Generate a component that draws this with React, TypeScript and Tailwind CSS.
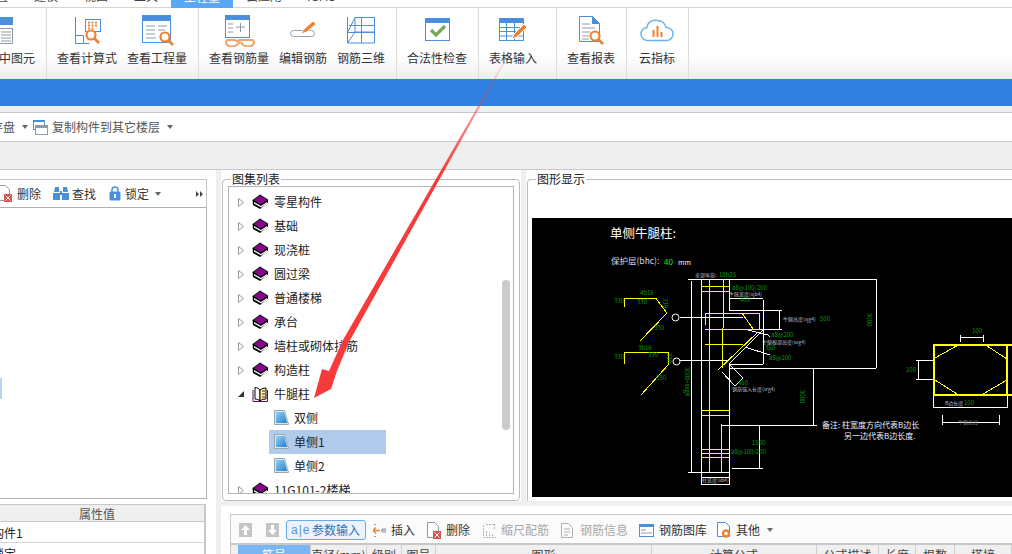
import React from "react";

const BLUE = "#4a8fdc";
const ORANGE = "#ee8230";

const Svg = ({ w = 40, h = 32, children }: { w?: number; h?: number; children: React.ReactNode }) => (
  <svg width={w} height={h} viewBox={`0 0 ${w} ${h}`} fill="none" className="shrink-0">
    {children}
  </svg>
);

const Lens = ({ x, y }: { x: number; y: number }) => (
  <g stroke={ORANGE} fill="#fff">
    <circle cx={x} cy={y} r="4.5" strokeWidth="2.2" />
    <path d={`M${x + 3} ${y + 3}l5 5`} strokeWidth="2.6" />
  </g>
);

const CalcIcon = () => (
  <Svg>
    <path d="M8.500 2v26.500h8v-8h-8M16.500 28.500h6" stroke={BLUE} />
    <rect x="18.500" y="4.500" width="15" height="12" stroke={BLUE} fill="#fff" />
    <path d="M21 7.500h10M21 10.500h10M21 13.500h6" stroke={ORANGE} strokeWidth="2" strokeDasharray="2 1.500" />
    <Lens x={24} y={20} />
  </Svg>
);

const QtyIcon = () => (
  <Svg>
    <rect x="5.500" y="0.500" width="28" height="27" stroke={BLUE} fill="#fff" />
    <rect x="5" y="0" width="29" height="6" fill={BLUE} />
    <path d="M9 11h9M21 11h9M9 15h9M21 15h7M9 19h9M9 23h10" stroke="#8d9aa5" />
    <Lens x={28} y={22} />
  </Svg>
);

const SteelIcon = () => (
  <Svg>
    <rect x="6.500" y="0.500" width="24" height="22" stroke={BLUE} fill="#fff" />
    <rect x="6" y="0" width="25" height="5" fill={BLUE} />
    <path d="M9 9h5M9 13h5M9 17h5M17 12h9M21.500 8v9" stroke="#8d9aa5" />
    <path d="M7 28a6 3.500 0 0 0 12 0a4 4 0 0 1 4 0a6 3.500 0 0 0 12 0c0-2-1-3-2-3H21c-2 0-2 1-3 1s-1-1-3-1H9c-1 0-2 1-2 3z" stroke="#f0a46a" strokeWidth="2" fill="#fff" />
  </Svg>
);

const EditIcon = () => (
  <Svg>
    <rect x="7.500" y="15.500" width="24" height="6" rx="3" stroke="#9aa3aa" />
    <path d="M18 19l3-5 9-8 3 3-9 8z" fill={ORANGE} stroke="#fff" />
  </Svg>
);

const FrameIcon = () => (
  <Svg>
    <g stroke={BLUE}>
      <path d="M6.500 2v26M20.500 2v26M33.500 2v26" />
      <path d="M6.500 17.500L14 2.500h19M6.500 28L14 17h19M6.500 28h27M6.500 17.500h27M8 10.500h25M14 2.500v15" />
    </g>
  </Svg>
);

const CheckIcon = () => (
  <Svg>
    <rect x="8.500" y="3.500" width="24" height="22" stroke={BLUE} fill="#fff" />
    <rect x="8" y="3" width="25" height="5" fill={BLUE} />
    <path d="M14 15l5 5 9-9" stroke="#74a95a" strokeWidth="3.200" />
  </Svg>
);

const TableIcon = () => (
  <Svg>
    <rect x="6.500" y="3.500" width="24" height="22" stroke={BLUE} fill="#fff" />
    <rect x="6" y="3" width="25" height="5" fill={BLUE} />
    <path d="M7 12.500h23M7 16.500h23M7 21h23M13.500 8v17M21.500 8v17" stroke={BLUE} />
    <path d="M19 24l2-5 10-10 3 3-10 10z" fill={ORANGE} stroke="#fff" />
  </Svg>
);

const ReportIcon = () => (
  <Svg>
    <path d="M8.500 1.500h13l7 7v18h-20z" stroke={BLUE} fill="#fff" />
    <path d="M21 1l8 8h-8z" fill={BLUE} />
    <path d="M11 9h8M11 13h13M11 17h8M11 21h7M11 24h7" stroke="#8d9aa5" />
    <Lens x={24} y={21} />
  </Svg>
);

const CloudIcon = () => (
  <Svg>
    <path d="M11 25.500a6.500 6.500 0 0 1-1-13a8 8 0 0 1 10-7a8.500 8.500 0 0 1 9 7a6.500 6.500 0 0 1 1 13z" stroke="#6ab3ee" strokeWidth="1.500" fill="#fff" />
    <path d="M16.500 15v7M20.500 11v11M24.500 17v5" stroke={ORANGE} strokeWidth="2" />
  </Svg>
);

const ribbon = [
  { w: "w-[47px] justify-end pr-[11px]", items: [{ t: "选中图元", i: <TableIconClip /> }] },
  { w: "pl-[10px] pr-[11px] gap-[10px]", items: [{ t: "查看计算式", i: <CalcIcon /> }, { t: "查看工程量", i: <QtyIcon /> }] },
  { w: "pl-[10px] pr-[11px] gap-[10px]", items: [{ t: "查看钢筋量", i: <SteelIcon /> }, { t: "编辑钢筋", i: <EditIcon /> }, { t: "钢筋三维", i: <FrameIcon /> }] },
  { w: "pl-[10px] pr-[11px]", items: [{ t: "合法性检查", i: <CheckIcon /> }] },
  { w: "pl-[10px] pr-[19px]", items: [{ t: "表格输入", i: <TableIcon /> }] },
  { w: "pl-[10px] pr-[11px]", items: [{ t: "查看报表", i: <ReportIcon /> }] },
  { w: "pl-[10px] pr-[11px]", items: [{ t: "云指标", i: <CloudIcon /> }] },
];

function TableIconClip() {
  return (
    <Svg>
      <rect x="5" y="2" width="17" height="8" fill={BLUE} />
      <rect x="8.500" y="13.500" width="13" height="15" fill="#fff" stroke="#8d9aa5" />
      <path d="M10 17h10M10 20h10M10 23h10M10 26h10" stroke="#8d9aa5" />
    </Svg>
  );
}

const Caret = () => (
  <span className="block w-0 h-0 border-x-[3px] border-x-transparent border-t-[4px] border-t-[#666]" />
);

const Book = () => (
  <svg width="17" height="16" viewBox="0 0 17 16" className="shrink-0">
    <path d="M0.500 6L8 0.500l8 5v3L8 15 1 11z" fill="#000" />
    <path d="M1.500 6L8 1.500l7.500 4.500L9 10.500z" fill="#800a84" />
    <path d="M2 8l7 4 6-4v1.500l-6 4-7-4z" fill="#fff" />
  </svg>
);

const OpenBook = () => (
  <svg width="17" height="17" viewBox="0 0 17 17" className="shrink-0">
    <path d="M3 1.500c2 0 4 1 5 2.500v11c-1-1-3-2-5-2z" fill="#fff" stroke="#000" />
    <path d="M8 4c1-1 3-2 6-2v11c-3 0-5 1-6 2z" fill="#fff58a" stroke="#000" />
    <path d="M1 4v11.500h14.500V4M10 5h3M10 8h3M10 11h3" stroke="#5b0a60" fill="none" />
  </svg>
);

const Sheet = () => (
  <svg width="15" height="16" viewBox="0 0 15 16" className="shrink-0">
    <defs>
      <linearGradient id="sheet" x1="0" y1="0" x2="1" y2="1">
        <stop offset="0" stopColor="#8fd3f5" />
        <stop offset="1" stopColor="#1f7fd0" />
      </linearGradient>
    </defs>
    <path d="M0.500 0.500h10l4 14h-14z" fill="#dfe5e8" stroke="#9aa6ad" />
    <path d="M2 2h8l3 11H2z" fill="url(#sheet)" />
  </svg>
);

const tree = ["零星构件", "基础", "现浇桩", "圆过梁", "普通楼梯", "承台", "墙柱或砌体拉筋", "构造柱"];

const Tri = () => (
  <svg width="6" height="9" viewBox="0 0 6 9" className="shrink-0">
    <path d="M0.500 0.500l5 4-5 4z" fill="#fff" stroke="#9a9a9a" />
  </svg>
);

const TreeRow = ({ label }: { label: string }) => (
  <div className="h-[24px] flex items-center pl-[9px]">
    <Tri />
    <div className="ml-[8px] mr-[5px]"><Book /></div>
    <span>{label}</span>
  </div>
);

const LeafRow = ({ label, sel }: { label: string; sel?: boolean }) => (
  <div className={`h-[24px] ml-[40px] w-[117px] flex items-center pl-[5px] gap-[5px] ${sel ? "bg-[#b1cbec]" : ""}`}>
    <Sheet />
    <span>{label}</span>
  </div>
);

// labels inside the drawing, page coordinates
const dim = "#0a9a0a";
const pale = "#b9b9c8";
const labels: { x: number; y: number; t: string; c: string; s?: number }[] = [
  { x: 695, y: 277, t: "全部纵筋:", c: pale, s: 5 },
  { x: 719, y: 277, t: "18b25", c: dim },
  { x: 732, y: 290, t: "a8@100/200", c: dim },
  { x: 729, y: 296, t: "牛肢宽度(sjb4)", c: pale, s: 5 },
  { x: 740, y: 302, t: "400", c: dim },
  { x: 783, y: 321, t: "牛腿高度(sjg4)", c: pale, s: 5 },
  { x: 820, y: 321, t: "500", c: dim },
  { x: 771, y: 337, t: "a8@200", c: dim },
  { x: 762, y: 344, t: "牛腿根部高度(sxg4)", c: pale, s: 5 },
  { x: 765, y: 350, t: "350", c: dim },
  { x: 769, y: 360, t: "a8@200", c: dim },
  { x: 732, y: 391, t: "钢筋锚入长度(srg4)", c: pale, s: 5 },
  { x: 738, y: 385, t: "450", c: dim },
  { x: 752, y: 445, t: "1500", c: dim },
  { x: 731, y: 454, t: "a8@100/200", c: dim },
  { x: 702, y: 482, t: "柱宽度(sb4)", c: pale, s: 5 },
  { x: 640, y: 295, t: "4b16", c: dim },
  { x: 614, y: 303, t: "330", c: dim },
  { x: 637, y: 304, t: "330", c: dim },
  { x: 654, y: 330, t: "330", c: dim },
  { x: 638, y: 350, t: "3b16", c: dim },
  { x: 614, y: 359, t: "330", c: dim },
  { x: 648, y: 357, t: "330", c: dim },
  { x: 656, y: 380, t: "330", c: dim },
  { x: 972, y: 333, t: "100", c: dim },
  { x: 906, y: 372, t: "100", c: dim },
  { x: 945, y: 405, t: "B边长度", c: pale, s: 5 },
  { x: 964, y: 405, t: "100", c: dim },
  { x: 958, y: 424, t: "牛腿总高", c: "#888", s: 5 },
];

const vLabels = [
  { x: 685, y: 367, t: "3000+sxg4" },
  { x: 800, y: 390, t: "3000" },
  { x: 867, y: 313, t: "3000" },
  { x: 663, y: 298, t: "330" },
  { x: 667, y: 353, t: "330" },
];

const white = [
  "M688 279.500H877", "M691.500 281V472", "M688 472.500H730", "M701.500 279V485", "M729.500 279V310", "M729.500 365V485",
  "M701 477.500H730", "M701 484.500H730", "M729 298.500H763", "M763.500 300V364", "M729 310.500H782", "M779.500 310V329",
  "M744 329.500H782", "M729 364.500H763", "M729 368.500H876", "M813.500 368V425", "M722 425.500H817", "M759.500 425V468",
  "M732 468.500H763", "M876.500 279V368", "M680 317.500H743", "M680 360.500H728", "M916 360.500H933", "M916 379.500H933",
  "M918.500 360V379", "M960 337.500H983", "M960.500 335V342", "M983.500 335V342", "M933 407.500H1007", "M933.500 396V408",
  "M1007.500 396V408", "M942 422.500H999", "M942.500 415V425", "M999.500 415V425",
  "M729 364L763 330", "M722 372L735 386L743 378L729 364", "M744 329L768 335L770 337", "M745 347L770 355",
];
const yellow = [
  "M701 286.500H729", "M701 291.500H729", "M709.500 279V472", "M723.500 279V328", "M722.500 328V368", "M721.500 424V472",
  "M705 313.500H759", "M705.500 313V325", "M759.500 313V330", "M705 329.500H759", "M705 344.500H743", "M701 410.500H729",
  "M701 415.500H729", "M701 449.500H729", "M701 453.500H729", "M701 457.500H729",
  "M742 313L753 329", "M718 370L757 333", "M624.500 307V298.500H656L667 313L640 341",
  "M624.500 364V352.500H668V365L641 395", "M935 358L960 344", "M984 344L1007 359", "M935 380L957 394", "M983 394L1007 380",
];

const Drawing = () => (
  <svg width="480" height="279" viewBox="532 218 480 279" className="block bg-black" style={{ fontFamily: "'Noto Sans CJK SC', sans-serif" }}>
    <g stroke="#fff" fill="none" shapeRendering="crispEdges">
      {white.map((d) => <path key={d} d={d} />)}
    </g>
    <circle cx="675.500" cy="317.500" r="3.500" stroke="#fff" fill="none" />
    <circle cx="676.500" cy="361.500" r="3.500" stroke="#fff" fill="none" />
    <g stroke="#ffff00" fill="none" shapeRendering="crispEdges">
      {yellow.map((d) => <path key={d} d={d} />)}
      <path d="M934 345H1012M934 395H1012M934 344V396M1007 344V396" strokeWidth="2" />
    </g>
    {labels.map((l) => (
      <text key={l.x + l.t + l.y} x={l.x} y={l.y} fontSize={l.s ?? 6} fill={l.c}>{l.t}</text>
    ))}
    {vLabels.map((l) => (
      <text key={l.t + l.x} x={l.x} y={l.y} fontSize="6" fill={dim} transform={`rotate(90 ${l.x} ${l.y})`}>{l.t}</text>
    ))}
    <text x="610" y="238" fontSize="12.500" fill="#fff">单侧牛腿柱:</text>
    <text x="611" y="264" fontSize="8.500" fill="#d8d8e8">保护层(bhc):</text>
    <text x="664" y="265" fontSize="8" fill="#00ff00">40</text>
    <text x="678" y="265" fontSize="7" fill="#fff">mm</text>
    <text x="822" y="428" fontSize="8" fill="#f0f0ff">备注: 柱宽度方向代表B边长</text>
    <text x="844" y="439" fontSize="8" fill="#f0f0ff">另一边代表B边长度.</text>
  </svg>
);

const DelIcon = () => (
  <svg width="14" height="17" viewBox="0 0 14 17" className="shrink-0">
    <path d="M0.500 0.500h7l4 4v11h-11z" fill="#fff" stroke="#8d9aa5" />
    <rect x="6" y="9" width="8" height="8" fill="#d9534f" />
    <path d="M7.500 10.500l5 5M12.500 10.500l-5 5" stroke="#fff" />
  </svg>
);

const Tool = ({ icon, label, off, cls }: { icon: React.ReactNode; label: string; off?: boolean; cls?: string }) => (
  <div className={`flex items-center gap-[5px] ${off ? "text-[#a8a8a8]" : "text-[#333]"} ${cls ?? ""}`}>
    {icon}
    <span>{label}</span>
  </div>
);

const cols = [
  { w: "w-[73px]", t: "筋号", c: "bg-[#7ab6f5] text-white" },
  { w: "w-[56px]", t: "直径(mm)" },
  { w: "w-[35px]", t: "级别" },
  { w: "w-[34px]", t: "图号" },
  { w: "w-[216px]", t: "图形" },
  { w: "w-[165px]", t: "计算公式" },
  { w: "w-[62px]", t: "公式描述" },
  { w: "w-[37px]", t: "长度" },
  { w: "w-[39px]", t: "根数" },
  { w: "w-[57px]", t: "搭接" },
];

export default function App() {
  return (
    <div
      className="relative w-[1012px] h-[554px] overflow-hidden flex flex-col bg-[#efefef] text-[12px] leading-[16px] text-[#222]"
      style={{ fontFamily: "'Microsoft YaHei', 'Noto Sans CJK SC', sans-serif" }}
    >
      {/* tabs, cut off by the top of the window */}
      <div className="h-[8px] shrink-0 flex bg-white border-b border-[#d4d4d4] text-[#444]">
        <div className="w-[21px] h-[7px] flex items-end justify-end pb-[3px] pr-[13px]"><span className="shrink-0">布置</span></div>
        {["建模", "视图", "工具"].map((t) => (
          <div key={t} className="w-[50px] h-[7px] flex items-end justify-center pb-[3px]"><span>{t}</span></div>
        ))}
        <div className="w-[62px] h-[8px] -mb-px flex items-end justify-center pb-[3px] bg-[#5ba7f5] text-white"><span>工程量</span></div>
        <div className="w-[62px] h-[7px] flex items-end justify-center pb-[3px]"><span>云应用</span></div>
        <div className="ml-[12px] h-[7px] flex items-end pb-[3px]"><span>IGMS</span></div>
      </div>

      {/* ribbon */}
      <div className="h-[71px] shrink-0 flex bg-linear-to-b from-white from-65% to-[#eceeec]">
        {ribbon.map((g) => (
          <div key={g.items[0].t} className={`h-full flex border-r border-[#dcdcdc] ${g.w}`}>
            {g.items.map((it) => (
              <div key={it.t} className="flex flex-col items-center pt-[7px] text-[#333]">
                <div className="h-[35px] w-[40px] overflow-visible">{it.i}</div>
                <span className="whitespace-nowrap">{it.t}</span>
              </div>
            ))}
          </div>
        ))}
      </div>

      <div className="h-[27px] shrink-0 bg-[#2f80e0]" />
      <div className="h-[6px] shrink-0" />

      <div className="h-[30px] shrink-0 flex items-center bg-white border-y border-[#c8c8cc] text-[#555]">
        <div className="w-[15px] flex justify-end"><span className="shrink-0">存盘</span></div>
        <div className="ml-[7px]"><Caret /></div>
        <div className="ml-[5px] mr-[4px]">
          <svg width="15" height="15" viewBox="0 0 15 15" className="block">
            <rect x="0.500" y="0.500" width="11" height="9" fill="#fff" stroke={BLUE} />
            <rect x="0" y="0" width="12" height="2" fill={BLUE} />
            <rect x="2.500" y="5.500" width="12" height="9" fill="#fff" stroke="#8d9aa5" />
            <rect x="2" y="5" width="13" height="3" fill="#8d9aa5" />
          </svg>
        </div>
        <span>复制构件到其它楼层</span>
        <div className="ml-[7px]"><Caret /></div>
      </div>

      <div className="h-[28px] shrink-0 border-b border-[#c8c8cc]" />

      {/* main area */}
      <div className="flex-1 flex min-h-0">
        {/* left column */}
        <div className="w-[216px] shrink-0 bg-white pt-[9px]">
          <div className="w-[207px] h-[29px] flex items-center border-y border-r border-[#c4c4c4] border-b-[#b0b0b0] text-[#333]">
            <div className="-ml-[2px] w-[14px]"><DelIcon /></div>
            <span className="ml-[5px]">删除</span>
            <svg width="16" height="15" viewBox="0 0 16 15" className="ml-[12px] shrink-0">
              <path d="M1 6h5V1H2zM10 1v5h5l-1-5zM0 7h7v7H0zM9 7h7v7H9z" fill={BLUE} />
              <rect x="7" y="5" width="2" height="4" fill={BLUE} />
            </svg>
            <span className="ml-[3px]">查找</span>
            <svg width="12" height="15" viewBox="0 0 12 15" className="ml-[13px] shrink-0">
              <path d="M3 6V4a3 3 0 0 1 6 0v2" stroke={BLUE} strokeWidth="1.500" fill="none" />
              <rect x="0.500" y="5.500" width="11" height="9" rx="1.500" fill={BLUE} />
              <rect x="5" y="8" width="2" height="4" fill="#fff" />
            </svg>
            <span className="ml-[4px]">锁定</span>
            <div className="ml-[6px]"><Caret /></div>
            <svg width="7" height="6" viewBox="0 0 7 6" className="ml-auto mr-[3px] shrink-0">
              <path d="M0 0l3 3-3 3zM4 0l3 3-3 3z" fill="#444" />
            </svg>
          </div>
          <div className="relative w-[207px] h-[291px] bg-white border-r border-b border-[#b0b0b0]">
            <div className="absolute left-0 top-[170px] w-[2px] h-[21px] bg-[#b9d3f2]" />
          </div>
          <div className="h-[5px]" />
          <div className="w-[206px] border-r-2 border-[#c8c8c8] overflow-hidden">
            <div className="h-[18px] flex items-center justify-center bg-[#efefef] border-y border-[#c8c8c8] text-[#555] pt-px pr-[10px]">属性值</div>
            <div className="h-[21px] flex items-center border-b border-[#d4d4d4] -ml-[8px] pt-px">构件1</div>
            <div className="h-[21px] flex items-center -ml-[8px]">锁定</div>
          </div>
        </div>

        {/* right side */}
        <div className="flex-1 min-w-0 pl-[5px] flex flex-col">
          <div className="h-[331px] shrink-0 flex gap-[5px]">
            <div className="w-[300px] bg-white pt-[2px] pl-px pr-px">
              <fieldset className="h-full border border-[#bcbcbc] rounded-[4px] px-[5px] pb-[5px] min-w-0">
                <legend className="ml-[3px] leading-[14px] px-px">图集列表</legend>
                <div className="relative h-[308px] border border-[#b4b4b4] overflow-hidden pt-[3px]">
                  {tree.map((t) => <TreeRow key={t} label={t} />)}
                  <div className="h-[24px] flex items-center pl-[9px]">
                    <svg width="6" height="6" viewBox="0 0 6 6" className="shrink-0"><path d="M6 0v6H0z" fill="#333" /></svg>
                    <div className="ml-[8px] mr-[5px]"><OpenBook /></div>
                    <span>牛腿柱</span>
                  </div>
                  <LeafRow label="双侧" />
                  <LeafRow label="单侧1" sel />
                  <LeafRow label="单侧2" />
                  <TreeRow label="11G101-2楼梯" />
                  <div className="absolute right-[3px] top-[93px] w-[8px] h-[150px] rounded-[4px] bg-[#cacaca]" />
                </div>
              </fieldset>
            </div>
            <div className="flex-1 min-w-0 bg-white pt-[2px] pl-px">
              <fieldset className="h-full border border-r-0 border-b-0 border-[#bcbcbc] rounded-tl-[4px] pl-[4px] min-w-0">
                <legend className="ml-[4px] leading-[14px] px-px">图形显示</legend>
                <div className="mt-[32px]"><Drawing /></div>
              </fieldset>
            </div>
          </div>

          {/* bottom table */}
          <div className="flex-1 mt-[5px] bg-white pt-[8px] pl-[9px] min-h-0 overflow-hidden">
            <div className="border-t border-l border-[#c8c8c8] bg-[#fbfbfb] h-full">
              <div className="h-[28px] flex items-center pt-[2px]">
                <svg width="13" height="14" viewBox="0 0 13 14" className="ml-[8px] shrink-0">
                  <rect width="13" height="14" fill="#c4c4c4" />
                  <path d="M6.500 2L11 7H8v5H5V7H2z" fill="#fff" />
                </svg>
                <svg width="13" height="14" viewBox="0 0 13 14" className="ml-[14px] shrink-0">
                  <rect width="13" height="14" fill="#c4c4c4" />
                  <path d="M6.500 12L11 7H8V2H5v5H2z" fill="#fff" />
                </svg>
                <div className="ml-[7px] w-[80px] h-[20px] flex items-center border border-[#6aa9ea] rounded-[3px] bg-[#eaf3fd] text-[#2f6fb8]">
                  <span className="pl-[4px] text-[12px] tracking-[1px] text-[#5b93cf] w-[23px] shrink-0 leading-none" style={{ fontFamily: "'Liberation Sans', sans-serif" }}>a|e</span>
                  <span className="ml-[2px] whitespace-nowrap">参数输入</span>
                </div>
                <Tool
                  cls="ml-[7px] gap-[4px]"
                  label="插入"
                  icon={
                    <svg width="13" height="15" viewBox="0 0 13 15" className="shrink-0">
                      <path d="M3 1.500H1M3 13.500H1M8 7h5" stroke="#8d9aa5" />
                      <path d="M0 7.500h7M3 4.500l-3 3 3 3" stroke={ORANGE} strokeWidth="1.500" fill="none" />
                      <path d="M9 6h4v3H9z" fill="none" stroke="#8d9aa5" />
                    </svg>
                  }
                />
                <Tool cls="ml-[12px]" label="删除" icon={<DelIcon />} />
                <Tool
                  off
                  cls="ml-[13px]"
                  label="缩尺配筋"
                  icon={
                    <svg width="13" height="15" viewBox="0 0 13 15" className="shrink-0">
                      <path d="M0.500 2v12.500H13M3.500 13V7M6.500 13V9M9.500 13v-2M3 1.500h8M11.500 1v5" stroke="#b4b4b4" fill="none" strokeDasharray="2 1" />
                    </svg>
                  }
                />
                <Tool
                  off
                  cls="ml-[12px] gap-[7px]"
                  label="钢筋信息"
                  icon={
                    <svg width="12" height="15" viewBox="0 0 12 15" className="shrink-0">
                      <path d="M0.500 0.500h7l4 4v10h-11zM3 6h6M3 9h6M3 12h4" fill="none" stroke="#b0b0b0" />
                    </svg>
                  }
                />
                <Tool
                  cls="ml-[11px]"
                  label="钢筋图库"
                  icon={
                    <svg width="15" height="13" viewBox="0 0 15 13" className="shrink-0">
                      <rect x="0.500" y="0.500" width="14" height="12" fill="#fff" stroke={BLUE} />
                      <rect width="15" height="3" fill={BLUE} />
                      <path d="M2 6h5M2 9h11" stroke="#8d9aa5" />
                    </svg>
                  }
                />
                <Tool
                  cls="ml-[10px]"
                  label="其他"
                  icon={
                    <svg width="14" height="16" viewBox="0 0 14 16" className="shrink-0">
                      <path d="M0.500 0.500h8l4 4v10h-12z" fill="#fff" stroke={BLUE} />
                      <circle cx="9" cy="11.500" r="3" fill="none" stroke={ORANGE} strokeWidth="2.500" />
                    </svg>
                  }
                />
                <div className="ml-[7px]"><Caret /></div>
              </div>
              <div className="h-[20px] flex bg-[#efefef] border-t-2 border-[#c8c8c8] pl-[7px] text-[#444]">
                {cols.map((c) => (
                  <div key={c.t} className={`shrink-0 h-[20px] flex items-center justify-center border-r border-[#cfcfcf] ${c.w} ${c.c ?? ""}`}>
                    <span className="truncate">{c.t}</span>
                  </div>
                ))}
              </div>
            </div>
          </div>
        </div>
      </div>

      {/* red arrow laid over the screenshot */}
      <svg width="1012" height="554" viewBox="0 0 1012 554" className="absolute inset-0 pointer-events-none">
        <defs>
          <linearGradient id="arrowFade" gradientUnits="userSpaceOnUse" x1="504" y1="62" x2="440" y2="172">
            <stop offset="0" stopColor="#f93a3a" stopOpacity="0.150" />
            <stop offset="1" stopColor="#f93a3a" />
          </linearGradient>
        </defs>
        <path d="M503.500 62L504.500 62.500L349 342L337 371L331 389L314 398L322 369L329 371L343 340Z" fill="url(#arrowFade)" />
      </svg>
    </div>
  );
}
